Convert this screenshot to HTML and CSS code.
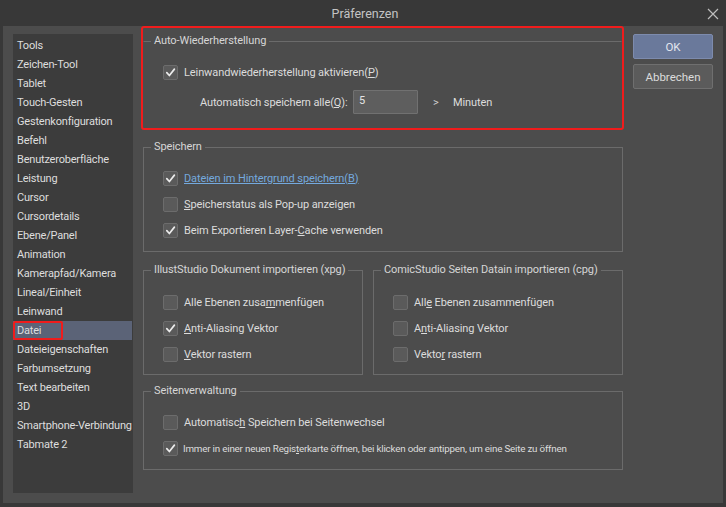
FILE: index.html
```html
<!DOCTYPE html>
<html lang="de">
<head>
<meta charset="utf-8">
<title>Präferenzen</title>
<link rel="stylesheet" href="styles.css">
</head>
<body>
<div class="window">
  <div class="titlebar">
    <span class="title">Präferenzen</span>
    <svg class="close" width="12" height="12" viewBox="0 0 12 12"><path d="M1 1 L11 11 M11 1 L1 11" stroke="#bdbdbd" stroke-width="1.2" fill="none"/></svg>
  </div>
  <div class="main">
    <ul class="sidebar">
      <li>Tools</li>
      <li>Zeichen-Tool</li>
      <li>Tablet</li>
      <li>Touch-Gesten</li>
      <li>Gestenkonfiguration</li>
      <li>Befehl</li>
      <li>Benutzeroberfläche</li>
      <li>Leistung</li>
      <li>Cursor</li>
      <li>Cursordetails</li>
      <li>Ebene/Panel</li>
      <li>Animation</li>
      <li>Kamerapfad/Kamera</li>
      <li>Lineal/Einheit</li>
      <li>Leinwand</li>
      <li class="selected"><span class="mark">Datei</span></li>
      <li>Dateieigenschaften</li>
      <li>Farbumsetzung</li>
      <li>Text bearbeiten</li>
      <li>3D</li>
      <li>Smartphone-Verbindung</li>
      <li>Tabmate 2</li>
    </ul>

    <div class="content">
      <div class="highlight">
        <fieldset class="group group-auto">
          <legend>Auto-Wiederherstellung</legend>
          <div class="rows">
            <div class="row"><span class="cb checked"><svg viewBox="0 0 15 15"><path d="M3.2 7.6 L6.2 11 L12 3.6"/></svg></span><span>Leinwandwiederherstellung aktivieren(<u>P</u>)</span></div>
            <div class="row row-input">
              <span class="lbl">Automatisch speichern alle(<u>Q</u>):</span>
              <span class="input">5</span>
              <span class="arrow">&gt;</span>
              <span>Minuten</span>
            </div>
          </div>
        </fieldset>
      </div>

      <fieldset class="group group-save">
        <legend>Speichern</legend>
        <div class="rows">
          <div class="row"><span class="cb checked"><svg viewBox="0 0 15 15"><path d="M3.2 7.6 L6.2 11 L12 3.6"/></svg></span><span class="link">Dateien im Hintergrund speichern(B)</span></div>
          <div class="row"><span class="cb"></span><span><u>S</u>peicherstatus als Pop-up anzeigen</span></div>
          <div class="row"><span class="cb checked"><svg viewBox="0 0 15 15"><path d="M3.2 7.6 L6.2 11 L12 3.6"/></svg></span><span>Beim Exportieren Layer-<u>C</u>ache verwenden</span></div>
        </div>
      </fieldset>

      <div class="import-row">
        <fieldset class="group group-xpg">
          <legend>IllustStudio Dokument importieren (xpg)</legend>
          <div class="rows">
            <div class="row"><span class="cb"></span><span>Alle Ebenen zusa<u>m</u>menfügen</span></div>
            <div class="row"><span class="cb checked"><svg viewBox="0 0 15 15"><path d="M3.2 7.6 L6.2 11 L12 3.6"/></svg></span><span><u>A</u>nti-Aliasing Vektor</span></div>
            <div class="row"><span class="cb"></span><span><u>V</u>ektor rastern</span></div>
          </div>
        </fieldset>
        <fieldset class="group group-cpg">
          <legend>ComicStudio Seiten Datain importieren (cpg)</legend>
          <div class="rows">
            <div class="row"><span class="cb"></span><span>All<u>e</u> Ebenen zusammenfügen</span></div>
            <div class="row"><span class="cb"></span><span>A<u>n</u>ti-Aliasing Vektor</span></div>
            <div class="row"><span class="cb"></span><span>Vekto<u>r</u> rastern</span></div>
          </div>
        </fieldset>
      </div>

      <fieldset class="group group-pages">
        <legend>Seitenverwaltung</legend>
        <div class="rows">
          <div class="row"><span class="cb"></span><span>Automatisc<u>h</u> Speichern bei Seitenwechsel</span></div>
          <div class="row"><span class="cb checked"><svg viewBox="0 0 15 15"><path d="M3.2 7.6 L6.2 11 L12 3.6"/></svg></span><span class="small">Immer in einer neuen Regis<u>t</u>erkarte öffnen, bei klicken oder antippen, um eine Seite zu öffnen</span></div>
        </div>
      </fieldset>
    </div>

    <div class="buttons">
      <button class="btn btn-ok">OK</button>
      <button class="btn">Abbrechen</button>
    </div>
  </div>
</div>
</body>
</html>
```

FILE: styles.css
```css
* { box-sizing: border-box; }

html, body {
  margin: 0;
  padding: 0;
  background: #383838;
  width: 726px;
  height: 507px;
  overflow: hidden;
  font-family: Roboto, "Liberation Sans", Arial, sans-serif;
  font-size: 11px;
  letter-spacing: -0.1px;
  color: #dcdcdc;
}

.window {
  display: flex;
  flex-direction: column;
  height: 507px;
}

.titlebar {
  height: 26px;
  position: relative;
  display: flex;
  align-items: center;
  justify-content: center;
  background: #383838;
}

.title {
  font-size: 12.5px;
  letter-spacing: 0;
  color: #c4c4c4;
  padding-left: 4px;
}

.close {
  position: absolute;
  right: 7px;
  top: 8px;
}

.main {
  margin: 0 3px 4px 3px;
  height: 477px;
  background: #4c4c4c;
  display: flex;
  align-items: flex-start;
}

.sidebar {
  list-style: none;
  margin: 8px 0 0 10px;
  padding: 2px 0 0 0;
  width: 120px;
  height: 459px;
  background: #3c3c3c;
  flex: none;
  letter-spacing: -0.2px;
}

.sidebar li {
  height: 19px;
  line-height: 19px;
  padding-left: 4px;
  white-space: nowrap;
  color: #dedede;
}

.sidebar li.selected {
  background: #5b6377;
  padding-left: 0;
  margin-right: 1px;
}

.sidebar .mark {
  display: inline-block;
  height: 19px;
  line-height: 15px;
  width: 50px;
  padding-left: 2px;
  border: 2px solid #f01c1c;
  border-radius: 2px;
}

.content {
  margin-left: 8px;
  width: 483px;
  flex: none;
  display: flex;
  flex-direction: column;
}

.group {
  margin: 0 1px 0 2px;
  padding: 0;
  border: 1px solid #6b6b6b;
  min-width: 0;
}

.group legend {
  margin-left: 7px;
  padding: 0 3px;
  height: 14px;
  line-height: 14px;
  color: #d6d6d6;
}

.rows {
  display: flex;
  flex-direction: column;
  padding-left: 19px;
}

.row {
  height: 26px;
  display: flex;
  align-items: center;
  gap: 6px;
  white-space: nowrap;
}

.cb {
  width: 15px;
  height: 15px;
  flex: none;
  background: #5a5a5a;
  border: 1px solid #6c6c6c;
  border-radius: 2px;
  display: flex;
}

.cb svg {
  width: 13px;
  height: 13px;
}

.cb svg path {
  fill: none;
  stroke: #ececec;
  stroke-width: 1.9;
  stroke-linecap: round;
  stroke-linejoin: round;
}

.link {
  color: #74a9de;
  text-decoration: underline;
}

.small {
  font-size: 9.8px;
  letter-spacing: -0.2px;
}

/* Auto-Wiederherstellung */
.highlight {
  border: 2px solid #f01c1c;
  border-radius: 3px;
  height: 104px;
  padding-top: 6px;
}

.group-auto {
  margin: 0;
  border-color: #6b6b6b transparent transparent transparent;
  height: 94px;
}

.group-auto .rows {
  padding-top: 11px;
}

.row-input {
  margin-top: 4px;
  padding-left: 37px;
  gap: 0;
}

.row-input .lbl {
  width: 153px;
  flex: none;
}

.input {
  width: 65px;
  height: 24px;
  flex: none;
  background: #5e5e5e;
  border: 1px solid #717171;
  border-radius: 1px;
  line-height: 20px;
  padding-left: 5px;
  color: #e4e4e4;
}

.arrow {
  margin-left: 15px;
  width: 20px;
  color: #cfcfcf;
}

/* Speichern */
.group-save {
  margin-top: 10px;
  height: 112px;
}

.group-save .rows {
  padding-top: 11px;
}

/* Import */
.import-row {
  margin: 11px 1px 0 2px;
  display: flex;
  gap: 10px;
}

.import-row .group {
  margin: 0;
  height: 112px;
}

.import-row .rows {
  padding-top: 12px;
}

.group-xpg { width: 220px; }
.group-cpg { width: 250px; }

/* Seitenverwaltung */
.group-pages {
  margin-top: 9px;
  height: 86px;
}

.group-pages .rows {
  padding-top: 11px;
}

.group-pages .row .small { margin-left: -1px; }

/* Buttons */
.buttons {
  margin: 8px 0 0 9px;
  width: 80px;
  display: flex;
  flex-direction: column;
  gap: 5px;
  flex: none;
}

.btn {
  height: 25px;
  width: 80px;
  font-family: inherit;
  font-size: 11.5px;
  color: #dcdcdc;
  background: #5b5b5b;
  border: 1px solid #6f6f6f;
  border-radius: 2px;
  padding: 0;
}

.btn-ok {
  background: #6a799b;
  border-color: #7d8bad;
  color: #e2e6ee;
}
```
